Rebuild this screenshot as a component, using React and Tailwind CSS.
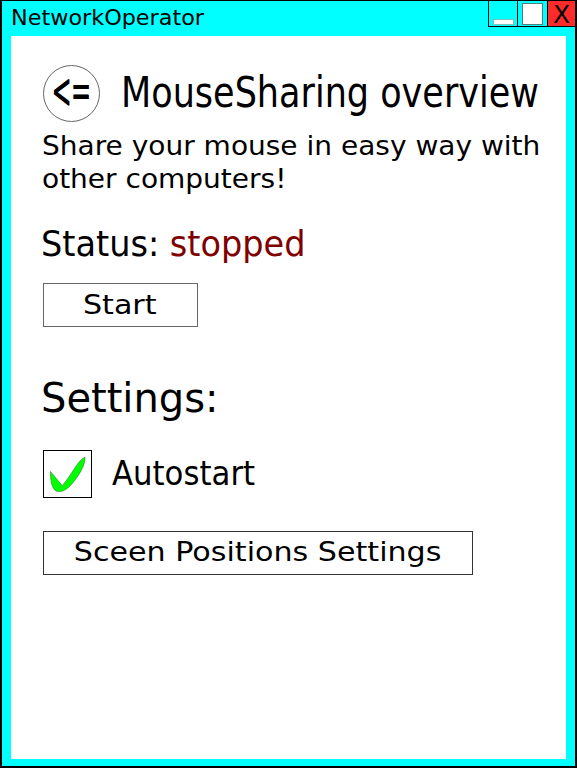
import React from "react";

function TitleBar() {
  return (
    <header className="flex h-[34.5px] shrink-0 items-start justify-between pl-[9px]">
      <span className="mt-px origin-left scale-x-[1.014] text-[22px] leading-[32px] whitespace-nowrap">
        NetworkOperator
      </span>
      <div className="flex h-[26px] border-b border-l border-black">
        <button className="flex w-[29px] items-end justify-center border-r border-black pb-[1px]">
          <span className="h-[6px] w-[21px] border border-[#7fbfbf] bg-white" />
        </button>
        <button className="flex w-[30px] items-center justify-center border-r border-black">
          <span className="h-[22px] w-[21px] border border-[#4d7f7f] bg-white" />
        </button>
        <button className="flex w-[27px] items-start justify-center bg-[#ff2a2a]">
          <span className="text-[25px] leading-[27px]">X</span>
        </button>
      </div>
    </header>
  );
}

function CheckMark() {
  return (
    <svg viewBox="0 0 49 48" className="h-[48px] w-[49px] shrink-0" aria-hidden="true">
      <path
        d="M7.5 21.5 L19.3 35.7 C25 29 29.500 21 33.500 15.500 C37 10.500 39 8.500 42 7.200 C42.500 16 35 27 28 35 C22 41.500 17 42.500 13 41 C8.500 38 7.300 30 7.500 21.500 Z"
        fill="#00ff00"
        stroke="#2d6b2d"
        strokeWidth="0.5"
      />
    </svg>
  );
}

export default function App() {
  return (
    <div className="flex h-[768px] w-[577px] flex-col border-2 border-t-1 border-black bg-[#00ffff] font-['DejaVu_Sans',sans-serif] text-black">
      <TitleBar />
      <main className="mr-[9px] mb-[7px] ml-[9px] flex flex-1 flex-col items-start bg-white pt-[29.5px] pl-[32px]">
        <div className="flex items-center">
          <button className="flex h-[57px] w-[57px] items-start justify-center rounded-full border border-[#666666]">
            <span className="-ml-[2px] scale-x-[0.465] text-[50px] leading-[51px] [text-shadow:1px_0_0_#000,2px_0_0_#000]">
              &lt;=
            </span>
          </button>
          <h1 className="-mt-[1px] ml-[21px] h-[52px] w-[420px] origin-left scale-x-[0.824] text-[42.5px] leading-[52px] whitespace-nowrap">
            MouseSharing overview
          </h1>
        </div>
        <p className="mt-[8px] -ml-[1px] origin-left scale-x-[1.065] text-[26.3px] leading-[33.3px] whitespace-nowrap">
          Share your mouse in easy way with
          <br />
          other computers!
        </p>
        <h2 className="mt-[25px] -ml-[2px] origin-left scale-x-[0.945] text-[35.5px] leading-[44px] whitespace-nowrap">
          Status: <span className="text-[#800000]">stopped</span>
        </h2>
        <button className="mt-[17px] flex h-[44px] w-[155px] items-start justify-center border border-[#666666]">
          <span className="-ml-[1px] scale-x-[1.16] text-[26px] leading-[43px]">Start</span>
        </button>
        <h2 className="mt-[46px] -ml-[2px] text-[40px] leading-[50px] whitespace-nowrap">Settings:</h2>
        <label className="mt-[27px] flex items-center">
          <span className="flex h-[48px] w-[49px] items-center justify-center border border-black">
            <CheckMark />
          </span>
          <span className="-mt-px ml-[19.5px] origin-left scale-x-[0.905] text-[34px] leading-[46px]">Autostart</span>
        </label>
        <button className="mt-[33px] flex h-[44px] w-[430px] items-start justify-center border border-[#333333]">
          <span className="scale-x-[1.159] text-[26px] leading-[40px] whitespace-nowrap">Sceen Positions Settings</span>
        </button>
      </main>
    </div>
  );
}
